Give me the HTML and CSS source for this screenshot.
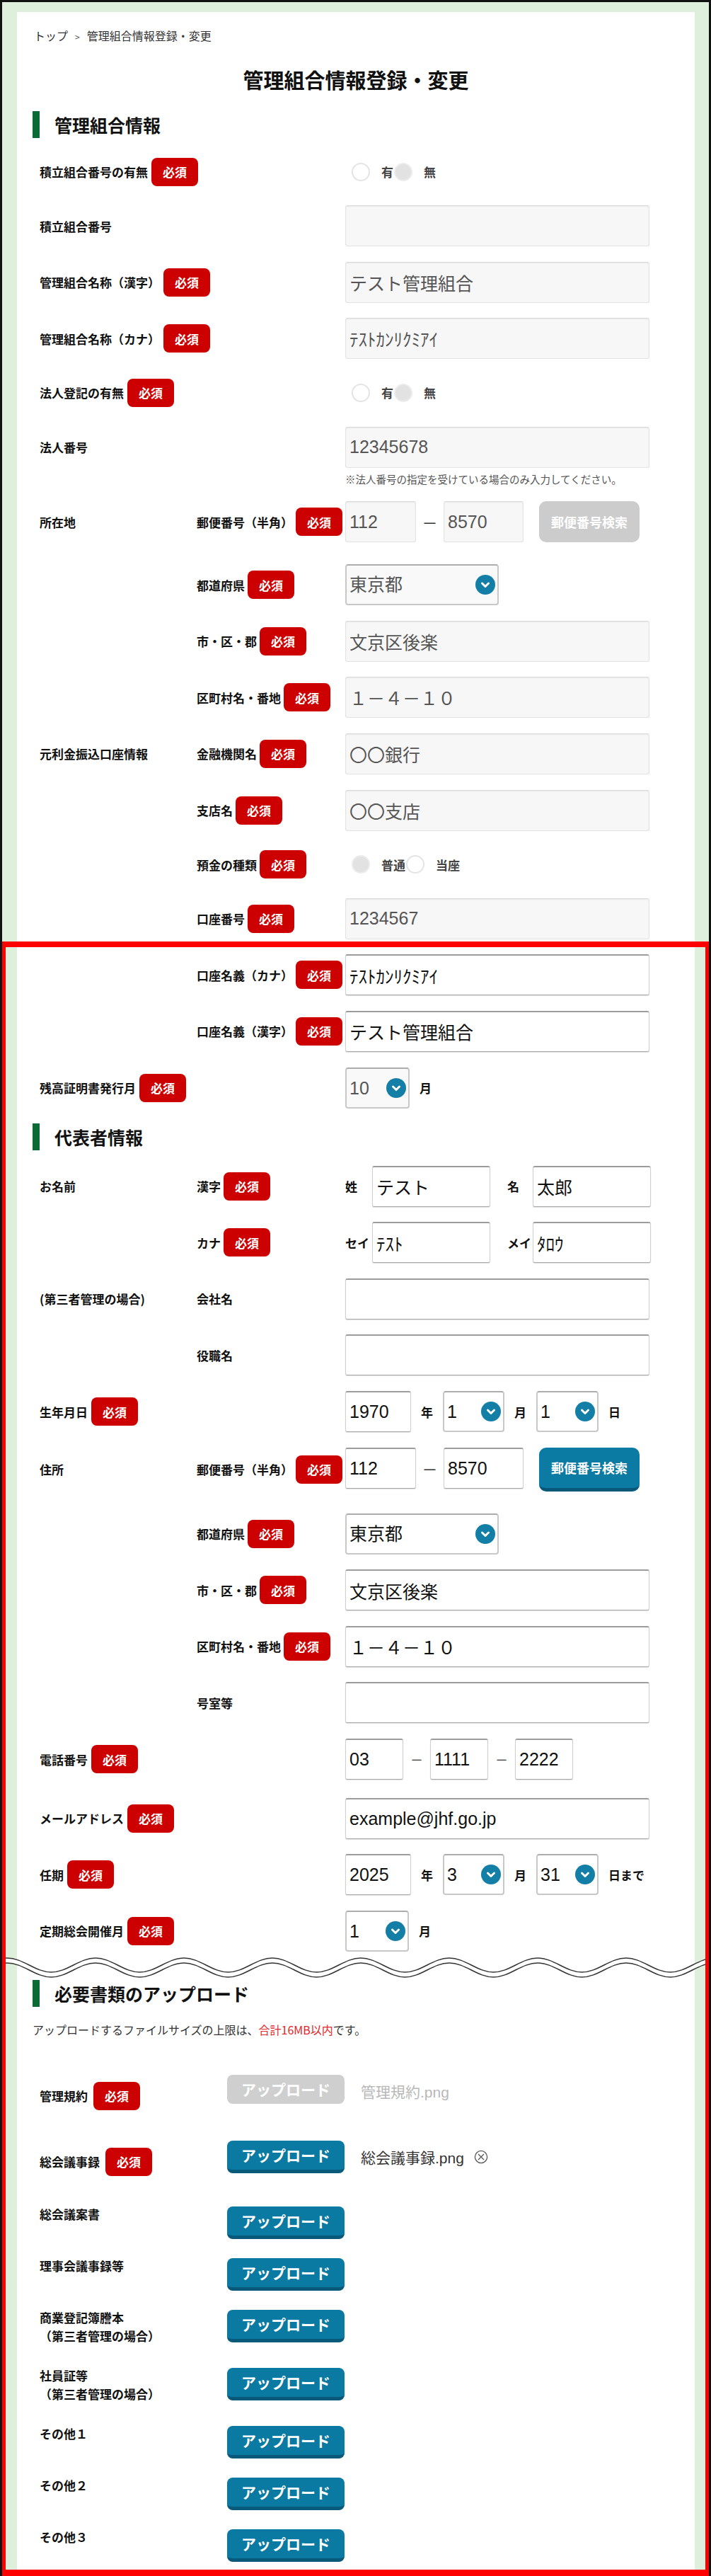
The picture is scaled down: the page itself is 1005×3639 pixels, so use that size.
FILE: index.html
```html
<!DOCTYPE html>
<html lang="ja">
<head>
<meta charset="utf-8">
<title>管理組合情報登録・変更</title>
<link rel="stylesheet" href="styles.css">
</head>
<body>
<div class="frame">
  <div class="page">
    <div class="crumb">トップ<span class="sep">&gt;</span>管理組合情報登録・変更</div>
    <h1 class="ttl">管理組合情報登録・変更</h1>

    <h2 class="sec">管理組合情報</h2>

    <div class="row radio">
      <div class="c1 c12">積立組合番号の有無<span class="req">必須</span></div>
      <div class="fld">
        <label class="rad"><input type="radio" name="r1" disabled>有</label>
        <label class="rad"><input type="radio" name="r1" checked disabled>無</label>
      </div>
    </div>
    <div class="row">
      <div class="c1 c12">積立組合番号</div>
      <div class="fld"><input class="inp w430" type="text" value="" readonly></div>
    </div>
    <div class="row">
      <div class="c1 c12">管理組合名称（漢字）<span class="req">必須</span></div>
      <div class="fld"><input class="inp w430" type="text" value="テスト管理組合" readonly></div>
    </div>
    <div class="row">
      <div class="c1 c12">管理組合名称（カナ）<span class="req">必須</span></div>
      <div class="fld"><input class="inp w430" type="text" value="ﾃｽﾄｶﾝﾘｸﾐｱｲ" readonly></div>
    </div>
    <div class="row radio">
      <div class="c1 c12">法人登記の有無<span class="req">必須</span></div>
      <div class="fld">
        <label class="rad"><input type="radio" name="r2" disabled>有</label>
        <label class="rad"><input type="radio" name="r2" checked disabled>無</label>
      </div>
    </div>
    <div class="row top">
      <div class="c1 c12">法人番号</div>
      <div class="fld col">
        <input class="inp w430" type="text" value="12345678" readonly>
        <p class="note">※法人番号の指定を受けている場合のみ入力してください。</p>
      </div>
    </div>
    <div class="row post">
      <div class="c1">所在地</div>
      <div class="c2">郵便番号（半角）<span class="req">必須</span></div>
      <div class="fld">
        <input class="inp w100" type="text" value="112" readonly>
        <span class="dash">－</span>
        <input class="inp w113" type="text" value="8570" readonly>
        <button class="pbtn" type="button" disabled>郵便番号検索</button>
      </div>
    </div>
    <div class="row">
      <div class="c1"></div>
      <div class="c2">都道府県<span class="req">必須</span></div>
      <div class="fld">
        <div class="sel w217"><select disabled><option>東京都</option></select><svg class="chev" viewBox="0 0 28 28"><circle cx="14" cy="14" r="14" fill="#137ea6"/><path d="M9.5 12 L14 16.5 L18.5 12" fill="none" stroke="#fff" stroke-width="3" stroke-linecap="round" stroke-linejoin="round"/></svg></div>
      </div>
    </div>
    <div class="row">
      <div class="c1"></div>
      <div class="c2">市・区・郡<span class="req">必須</span></div>
      <div class="fld"><input class="inp w430" type="text" value="文京区後楽" readonly></div>
    </div>
    <div class="row">
      <div class="c1"></div>
      <div class="c2">区町村名・番地<span class="req">必須</span></div>
      <div class="fld"><input class="inp w430" type="text" value="１－４－１０" readonly></div>
    </div>
    <div class="row">
      <div class="c1">元利金振込口座情報</div>
      <div class="c2">金融機関名<span class="req">必須</span></div>
      <div class="fld"><input class="inp jp w430" type="text" value="〇〇銀行" readonly></div>
    </div>
    <div class="row">
      <div class="c1"></div>
      <div class="c2">支店名<span class="req">必須</span></div>
      <div class="fld"><input class="inp jp w430" type="text" value="〇〇支店" readonly></div>
    </div>
    <div class="row radio">
      <div class="c1"></div>
      <div class="c2">預金の種類<span class="req">必須</span></div>
      <div class="fld">
        <label class="rad"><input type="radio" name="r3" checked disabled>普通</label>
        <label class="rad"><input type="radio" name="r3" disabled>当座</label>
      </div>
    </div>
    <div class="row">
      <div class="c1"></div>
      <div class="c2">口座番号<span class="req">必須</span></div>
      <div class="fld"><input class="inp w430" type="text" value="1234567" readonly></div>
    </div>
    <div class="row">
      <div class="c1"></div>
      <div class="c2">口座名義（カナ）<span class="req">必須</span></div>
      <div class="fld"><input class="inp on w430" type="text" value="ﾃｽﾄｶﾝﾘｸﾐｱｲ"></div>
    </div>
    <div class="row">
      <div class="c1"></div>
      <div class="c2">口座名義（漢字）<span class="req">必須</span></div>
      <div class="fld"><input class="inp on w430" type="text" value="テスト管理組合"></div>
    </div>
    <div class="row">
      <div class="c1 c12">残高証明書発行月<span class="req">必須</span></div>
      <div class="fld">
        <div class="sel w91"><select disabled><option>10</option></select><svg class="chev" viewBox="0 0 28 28"><circle cx="14" cy="14" r="14" fill="#137ea6"/><path d="M9.5 12 L14 16.5 L18.5 12" fill="none" stroke="#fff" stroke-width="3" stroke-linecap="round" stroke-linejoin="round"/></svg></div>
        <span class="unit">月</span>
      </div>
    </div>

    <h2 class="sec">代表者情報</h2>

    <div class="row">
      <div class="c1">お名前</div>
      <div class="c2">漢字<span class="req">必須</span></div>
      <div class="fld">
        <span class="nm">姓</span><input class="inp on w167" type="text" value="テスト">
        <span class="nm nm2">名</span><input class="inp on w167" type="text" value="太郎">
      </div>
    </div>
    <div class="row">
      <div class="c1"></div>
      <div class="c2">カナ<span class="req">必須</span></div>
      <div class="fld">
        <span class="nm">セイ</span><input class="inp on w167" type="text" value="ﾃｽﾄ">
        <span class="nm nm2">メイ</span><input class="inp on w167" type="text" value="ﾀﾛｳ">
      </div>
    </div>
    <div class="row">
      <div class="c1">(第三者管理の場合)</div>
      <div class="c2">会社名</div>
      <div class="fld"><input class="inp on w430" type="text" value=""></div>
    </div>
    <div class="row">
      <div class="c1"></div>
      <div class="c2">役職名</div>
      <div class="fld"><input class="inp on w430" type="text" value=""></div>
    </div>
    <div class="row">
      <div class="c1 c12">生年月日<span class="req">必須</span></div>
      <div class="fld">
        <input class="inp on w93" type="text" value="1970">
        <span class="unit">年</span>
        <div class="sel on w87"><select><option>1</option></select><svg class="chev" viewBox="0 0 28 28"><circle cx="14" cy="14" r="14" fill="#137ea6"/><path d="M9.5 12 L14 16.5 L18.5 12" fill="none" stroke="#fff" stroke-width="3" stroke-linecap="round" stroke-linejoin="round"/></svg></div>
        <span class="unit">月</span>
        <div class="sel on w88"><select><option>1</option></select><svg class="chev" viewBox="0 0 28 28"><circle cx="14" cy="14" r="14" fill="#137ea6"/><path d="M9.5 12 L14 16.5 L18.5 12" fill="none" stroke="#fff" stroke-width="3" stroke-linecap="round" stroke-linejoin="round"/></svg></div>
        <span class="unit">日</span>
      </div>
    </div>
    <div class="row post">
      <div class="c1">住所</div>
      <div class="c2">郵便番号（半角）<span class="req">必須</span></div>
      <div class="fld top">
        <input class="inp on w100" type="text" value="112">
        <span class="dash">－</span>
        <input class="inp on w113" type="text" value="8570">
        <button class="pbtn on" type="button">郵便番号検索</button>
      </div>
    </div>
    <div class="row">
      <div class="c1"></div>
      <div class="c2">都道府県<span class="req">必須</span></div>
      <div class="fld">
        <div class="sel on w217"><select><option>東京都</option></select><svg class="chev" viewBox="0 0 28 28"><circle cx="14" cy="14" r="14" fill="#137ea6"/><path d="M9.5 12 L14 16.5 L18.5 12" fill="none" stroke="#fff" stroke-width="3" stroke-linecap="round" stroke-linejoin="round"/></svg></div>
      </div>
    </div>
    <div class="row">
      <div class="c1"></div>
      <div class="c2">市・区・郡<span class="req">必須</span></div>
      <div class="fld"><input class="inp on w430" type="text" value="文京区後楽"></div>
    </div>
    <div class="row">
      <div class="c1"></div>
      <div class="c2">区町村名・番地<span class="req">必須</span></div>
      <div class="fld"><input class="inp on w430" type="text" value="１－４－１０"></div>
    </div>
    <div class="row">
      <div class="c1"></div>
      <div class="c2">号室等</div>
      <div class="fld"><input class="inp on w430" type="text" value=""></div>
    </div>
    <div class="row tel">
      <div class="c1 c12">電話番号<span class="req">必須</span></div>
      <div class="fld">
        <input class="inp on w82" type="text" value="03">
        <span class="dash t">－</span>
        <input class="inp on w82" type="text" value="1111">
        <span class="dash t">－</span>
        <input class="inp on w82" type="text" value="2222">
      </div>
    </div>
    <div class="row">
      <div class="c1 c12">メールアドレス<span class="req">必須</span></div>
      <div class="fld"><input class="inp on w430" type="text" value="example@jhf.go.jp"></div>
    </div>
    <div class="row">
      <div class="c1 c12">任期<span class="req">必須</span></div>
      <div class="fld">
        <input class="inp on w93" type="text" value="2025">
        <span class="unit">年</span>
        <div class="sel on w87"><select><option>3</option></select><svg class="chev" viewBox="0 0 28 28"><circle cx="14" cy="14" r="14" fill="#137ea6"/><path d="M9.5 12 L14 16.5 L18.5 12" fill="none" stroke="#fff" stroke-width="3" stroke-linecap="round" stroke-linejoin="round"/></svg></div>
        <span class="unit">月</span>
        <div class="sel on w88"><select><option>31</option></select><svg class="chev" viewBox="0 0 28 28"><circle cx="14" cy="14" r="14" fill="#137ea6"/><path d="M9.5 12 L14 16.5 L18.5 12" fill="none" stroke="#fff" stroke-width="3" stroke-linecap="round" stroke-linejoin="round"/></svg></div>
        <span class="unit">日まで</span>
      </div>
    </div>
    <div class="row last">
      <div class="c1 c12">定期総会開催月<span class="req">必須</span></div>
      <div class="fld">
        <div class="sel on w90"><select><option>1</option></select><svg class="chev" viewBox="0 0 28 28"><circle cx="14" cy="14" r="14" fill="#137ea6"/><path d="M9.5 12 L14 16.5 L18.5 12" fill="none" stroke="#fff" stroke-width="3" stroke-linecap="round" stroke-linejoin="round"/></svg></div>
        <span class="unit">月</span>
      </div>
    </div>

    <svg class="wave" viewBox="0 0 988 31" aria-hidden="true">
      <defs>
        <path id="wv" fill="none" d="M-62.5 22 c22.76 0 39.74 -20 62.5 -20 s39.74 20 62.5 20 s39.74 -20 62.5 -20 s39.74 20 62.5 20 s39.74 -20 62.5 -20 s39.74 20 62.5 20 s39.74 -20 62.5 -20 s39.74 20 62.5 20 s39.74 -20 62.5 -20 s39.74 20 62.5 20 s39.74 -20 62.5 -20 s39.74 20 62.5 20 s39.74 -20 62.5 -20 s39.74 20 62.5 20 s39.74 -20 62.5 -20 s39.74 20 62.5 20 s39.74 -20 62.5 -20 s39.74 20 62.5 20"/>
      </defs>
      <use href="#wv" stroke="#fff" stroke-width="7" transform="translate(0 3.5)"/>
      <use href="#wv" stroke="#333" stroke-width="1.5"/>
      <use href="#wv" stroke="#333" stroke-width="1.5" transform="translate(0 7)"/>
    </svg>

    <h2 class="sec sec3">必要書類のアップロード</h2>
    <p class="unote">アップロードするファイルサイズの上限は、<span class="red">合計16MB以内</span>です。</p>

    <div class="urow rq">
      <div class="ulbl">管理規約<span class="req">必須</span></div>
      <div class="ufld">
        <button class="ubtn off" type="button" disabled>アップロード</button>
        <span class="fname off">管理規約.png</span>
      </div>
    </div>
    <div class="urow rq">
      <div class="ulbl">総会議事録<span class="req">必須</span></div>
      <div class="ufld">
        <button class="ubtn" type="button">アップロード</button>
        <span class="fname">総会議事録.png</span>
        <svg class="xicon" viewBox="0 0 20 20"><circle cx="10" cy="10" r="8.6" fill="none" stroke="#555" stroke-width="1.3"/><path d="M6 6 L14 14 M14 6 L6 14" stroke="#555" stroke-width="1.3"/></svg>
      </div>
    </div>
    <div class="urow">
      <div class="ulbl">総会議案書</div>
      <div class="ufld"><button class="ubtn" type="button">アップロード</button></div>
    </div>
    <div class="urow">
      <div class="ulbl">理事会議事録等</div>
      <div class="ufld"><button class="ubtn" type="button">アップロード</button></div>
    </div>
    <div class="urow two">
      <div class="ulbl lines">商業登記簿謄本<br>（第三者管理の場合）</div>
      <div class="ufld"><button class="ubtn" type="button">アップロード</button></div>
    </div>
    <div class="urow two">
      <div class="ulbl lines">社員証等<br>（第三者管理の場合）</div>
      <div class="ufld"><button class="ubtn" type="button">アップロード</button></div>
    </div>
    <div class="urow">
      <div class="ulbl">その他１</div>
      <div class="ufld"><button class="ubtn" type="button">アップロード</button></div>
    </div>
    <div class="urow">
      <div class="ulbl">その他２</div>
      <div class="ufld"><button class="ubtn" type="button">アップロード</button></div>
    </div>
    <div class="urow">
      <div class="ulbl">その他３</div>
      <div class="ufld"><button class="ubtn" type="button">アップロード</button></div>
    </div>
  </div>
  <div class="mark"></div>
</div>
</body>
</html>
```

FILE: styles.css
```css
* { box-sizing: border-box; }
html, body { margin: 0; padding: 0; }
body {
  font-family: "Noto Sans CJK JP", sans-serif;
  color: #111;
  background: #fff;
}
button, input, select { font-family: inherit; }

.frame {
  position: relative;
  height: 3639px;
  overflow: hidden;
  border: 3px solid #111;
  border-bottom: none;
  background: #deefdb;
  padding: 14px 20px 0 21px;
}
.page {
  height: 100%;
  background: #fff;
  padding: 21px 22px 0;
}

.crumb {
  font-size: 16px;
  line-height: 24px;
  color: #333;
  padding-left: 2px;
}
.crumb .sep { font-size: 12px; margin: 0 10px; color: #555; }

.ttl {
  margin: 28px 0 25px;
  text-align: center;
  font-size: 29px;
  font-weight: 700;
  line-height: 40px;
}

.sec {
  margin: 0 0 21.6px;
  height: 38px;
  line-height: 38px;
  border-left: 10px solid #0a6b35;
  padding-left: 21px;
  font-size: 25px;
  font-weight: 700;
}
.sec3 { margin: 2px 0 0; }

.row {
  display: flex;
  align-items: center;
  min-height: 58px;
  margin: 0 0 21.6px 10px;
}
.row.radio { min-height: 52px; }
.row.top { align-items: flex-start; }
.row.top > .c1 { height: 58px; }
.row.post { margin-bottom: 31px; }
.row.tel { margin-bottom: 25.6px; }
.row.last { margin-bottom: 7px; }

.c1, .c2 {
  flex: none;
  display: flex;
  align-items: center;
  font-size: 17px;
  font-weight: 700;
  white-space: nowrap;
}
.c1 { width: 222px; gap: 5px; }
.c1.c12 { width: 432px; }
.c2 { width: 210px; gap: 4px; }

.req {
  flex: none;
  width: 66px;
  height: 40px;
  border-radius: 8px;
  background: #cc0000;
  color: #fff;
  font-size: 17px;
  font-weight: 700;
  display: flex;
  align-items: center;
  justify-content: center;
}

.fld { display: flex; align-items: center; }
.fld.col { flex-direction: column; align-items: flex-start; }
.fld.top { align-items: flex-start; }
.fld.top .dash { line-height: 58px; }

.inp {
  height: 58px;
  padding: 0 5px;
  font-family: "Liberation Sans", "Noto Sans CJK JP", sans-serif;
  font-size: 25px;
  color: #555;
  background: #f7f7f7;
  border: 1px solid #e3e3e3;
  border-top-color: #d8d8d8;
  border-radius: 3px;
  box-shadow: inset 0 1px 2px rgba(0, 0, 0, 0.06);
  outline: none;
}
.inp.jp { font-family: "Noto Sans CJK JP", sans-serif; }
.inp.on {
  color: #111;
  background: #fff;
  border: 1px solid #cfcfcf;
  border-top: 2px solid #9c9c9c;
  border-bottom-color: #a8a8a8;
  box-shadow: 0 1px 1px rgba(0, 0, 0, 0.12);
}
.w430 { width: 430px; }
.w217 { width: 217px; }
.w167 { width: 167px; }
.w113 { width: 113px; }
.w100 { width: 100px; }
.w93 { width: 93px; }
.w91 { width: 91px; }
.w90 { width: 90px; }
.w88 { width: 88px; }
.w87 { width: 87px; }
.w82 { width: 82px; }

.note {
  margin: 6px 0 0;
  font-size: 14.5px;
  line-height: 20px;
  color: #555;
}

.rad {
  display: flex;
  align-items: center;
  font-size: 17px;
  font-weight: 700;
  color: #444;
}
.rad:first-child { margin-left: 9px; }
.rad + .rad { margin-left: 1px; }
.rad input {
  appearance: none;
  -webkit-appearance: none;
  width: 26px;
  height: 26px;
  margin: 0 16px 0 0;
  border-radius: 50%;
  border: 2px solid #e4e4e4;
  background: #fff;
}
.rad input:checked { background: #e2e2e2; border-color: #ececec; }

.sel { position: relative; height: 58px; flex: none; }
.sel select {
  appearance: none;
  -webkit-appearance: none;
  width: 100%;
  height: 100%;
  padding: 0 0 0 4px;
  font-family: "Liberation Sans", "Noto Sans CJK JP", sans-serif;
  font-size: 25px;
  color: #555;
  background: #f9f9f9;
  border: 2px solid #c8c8c8;
  border-top-color: #adadad;
  border-radius: 4px;
  opacity: 1;
}
.sel.on select { background: #fff; color: #111; }
.sel .chev {
  position: absolute;
  right: 5px;
  top: 50%;
  width: 28px;
  height: 28px;
  margin-top: -14px;
  pointer-events: none;
}

.unit {
  font-size: 17px;
  font-weight: 700;
  margin: 0 14px 0 14px;
  white-space: nowrap;
}

.nm {
  flex: none;
  width: 38px;
  font-size: 17px;
  font-weight: 700;
}
.nm2 { width: 36px; margin-left: 24px; }

.dash {
  flex: none;
  width: 39px;
  text-align: center;
  font-size: 22px;
  color: #333;
}
.dash.t { width: 38px; font-size: 18px; }

.pbtn {
  flex: none;
  margin-left: 22px;
  width: 142px;
  height: 58px;
  border: none;
  border-radius: 10px;
  background: #cccccc;
  color: #fff;
  font-size: 18px;
  font-weight: 700;
  padding: 0;
}
.pbtn.on {
  height: 62px;
  background: #0c7ba3;
  border-bottom: 5px solid #09587a;
}

.wave {
  display: block;
  width: 988px;
  height: 31px;
  margin: 0 0 0 -36px;
  overflow: visible;
}

.unote {
  margin: 20px 0 52px;
  font-size: 16px;
  line-height: 24px;
  color: #333;
}
.unote .red { color: #e3262b; }

.urow {
  display: flex;
  align-items: flex-start;
  margin: 0 0 27px 10px;
}
.urow.rq { min-height: 66px; }
.urow.two { min-height: 55px; }

.ulbl {
  flex: none;
  width: 265px;
  display: flex;
  align-items: center;
  gap: 8px;
  font-size: 17px;
  font-weight: 700;
  line-height: 22px;
}
.urow.rq .ulbl { padding-top: 10px; }
.ulbl.lines { display: block; line-height: 26px; margin-top: -2px; }

.ufld { display: flex; align-items: center; }
.ubtn {
  flex: none;
  width: 166px;
  height: 46px;
  padding: 0;
  border: none;
  border-bottom: 5px solid #08597a;
  border-radius: 8px;
  background: #0b7aa2;
  color: #fff;
  font-size: 21px;
  font-weight: 700;
}
.ubtn.off {
  height: 41px;
  margin-bottom: 5px;
  border-bottom: none;
  background: #cfcfcf;
}
.fname {
  margin-left: 23px;
  font-family: "Liberation Sans", "Noto Sans CJK JP", sans-serif;
  font-size: 21px;
  color: #333;
}
.fname.off { color: #b8b8b8; }
.xicon { width: 20px; height: 20px; margin-left: 14px; }

.mark {
  position: absolute;
  left: -3px;
  right: -3px;
  top: 1327px;
  bottom: 0;
  border: 8px solid #ff0000;
  border-bottom-width: 9px;
  pointer-events: none;
}
```
